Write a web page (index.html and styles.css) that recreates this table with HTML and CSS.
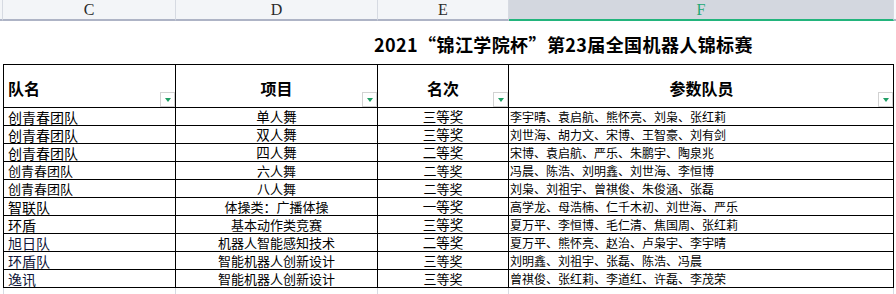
FILE: index.html
```html
<!DOCTYPE html>
<html lang="zh-CN">
<head>
<meta charset="utf-8">
<title>2021锦江学院杯 第23届全国机器人锦标赛</title>
<link rel="stylesheet" href="styles.css">
</head>
<body>
<div class="colbar">
  <div class="ch stub"></div>
  <div class="ch c">C</div>
  <div class="ch d">D</div>
  <div class="ch e">E</div>
  <div class="ch f sel">F</div>
  <div class="ch rest"></div>
</div>
<div class="title-row"><span class="title">2021“锦江学院杯”第23届全国机器人锦标赛</span></div>
<div class="sheet">
  <div class="row head">
    <div class="cell stub"></div>
    <div class="cell c">队名<span class="filter"></span></div>
    <div class="cell d">项目<span class="filter"></span></div>
    <div class="cell e">名次<span class="filter"></span></div>
    <div class="cell f">参数队员<span class="filter"></span></div>
  </div>
  <div class="row">
    <div class="cell stub"></div>
    <div class="cell c big">创青春团队</div>
    <div class="cell d big">单人舞</div>
    <div class="cell e big">三等奖</div>
    <div class="cell f">李宇晴、袁启航、熊怀亮、刘枭、张红莉</div>
  </div>
  <div class="row">
    <div class="cell stub"></div>
    <div class="cell c big">创青春团队</div>
    <div class="cell d big">双人舞</div>
    <div class="cell e big">三等奖</div>
    <div class="cell f">刘世海、胡力文、宋博、王智豪、刘有剑</div>
  </div>
  <div class="row">
    <div class="cell stub"></div>
    <div class="cell c big">创青春团队</div>
    <div class="cell d big">四人舞</div>
    <div class="cell e big">二等奖</div>
    <div class="cell f">宋博、袁启航、严乐、朱鹏宇、陶泉兆</div>
  </div>
  <div class="row">
    <div class="cell stub"></div>
    <div class="cell c">创青春团队</div>
    <div class="cell d">六人舞</div>
    <div class="cell e">二等奖</div>
    <div class="cell f">冯晨、陈浩、刘明鑫、刘世海、李恒博</div>
  </div>
  <div class="row">
    <div class="cell stub"></div>
    <div class="cell c">创青春团队</div>
    <div class="cell d">八人舞</div>
    <div class="cell e">二等奖</div>
    <div class="cell f">刘枭、刘祖宇、曾祺俊、朱俊涵、张磊</div>
  </div>
  <div class="row">
    <div class="cell stub"></div>
    <div class="cell c big">智联队</div>
    <div class="cell d">体操类：广播体操</div>
    <div class="cell e big">一等奖</div>
    <div class="cell f">高学龙、母浩楠、仁千木初、刘世海、严乐</div>
  </div>
  <div class="row">
    <div class="cell stub"></div>
    <div class="cell c big">环盾</div>
    <div class="cell d">基本动作类竞赛</div>
    <div class="cell e big">三等奖</div>
    <div class="cell f">夏万平、李恒博、毛仁清、焦国周、张红莉</div>
  </div>
  <div class="row">
    <div class="cell stub"></div>
    <div class="cell c big ink">旭日队</div>
    <div class="cell d">机器人智能感知技术</div>
    <div class="cell e big">二等奖</div>
    <div class="cell f">夏万平、熊怀亮、赵治、卢枭宇、李宇晴</div>
  </div>
  <div class="row">
    <div class="cell stub"></div>
    <div class="cell c big ink">环盾队</div>
    <div class="cell d">智能机器人创新设计</div>
    <div class="cell e">三等奖</div>
    <div class="cell f">刘明鑫、刘祖宇、张磊、陈浩、冯晨</div>
  </div>
  <div class="row">
    <div class="cell stub"></div>
    <div class="cell c big ink">逸讯</div>
    <div class="cell d">智能机器人创新设计</div>
    <div class="cell e">三等奖</div>
    <div class="cell f">曾祺俊、张红莉、李道红、许磊、李茂荣</div>
  </div>
  <div class="row tail">
    <div class="cell stub"></div>
    <div class="cell c"></div>
    <div class="cell d"></div>
    <div class="cell e"></div>
    <div class="cell f"></div>
  </div>
</div>
</body>
</html>
```

FILE: styles.css
```css
* { box-sizing: border-box; }
html, body { margin: 0; padding: 0; background: #fff; }
body {
  width: 896px;
  height: 294px;
  overflow: hidden;
  font-family: "Noto Sans CJK SC", "Noto Sans", sans-serif;
  color: #000;
}

/* column letter bar */
.colbar {
  display: flex;
  height: 21px;
  background: #f3f5f8;
}
.ch {
  height: 21px;
  border-right: 1px solid #d6dae2;
  border-bottom: 2px solid #aeb4c6;
  font-family: "Liberation Serif", serif;
  font-size: 16px;
  line-height: 19px;
  text-align: center;
  color: #2a2a2a;
}
.ch.stub { width: 3px; }
.ch.c { width: 173px; }
.ch.d { width: 202px; }
.ch.e { width: 131px; }
.ch.f { width: 385px; }
.ch.rest { flex: 1; border-right: none; background: #f6f8fb; }
.ch.sel {
  background: #d3d7df;
  color: #21a873;
  border-bottom-color: #22b47c;
}

/* title */
.title-row {
  height: 43px;
  padding-left: 374px;
  display: flex;
  align-items: center;
}
.title {
  font-size: 18px;
  font-weight: 700;
  line-height: 1;
  padding-top: 2px;
  letter-spacing: 0.4px;
}

/* table */
.sheet { display: flex; flex-direction: column; }
.row {
  display: flex;
  height: 18px;
}
.cell {
  position: relative;
  display: flex;
  align-items: center;
  justify-content: center;
  border-right: 1px solid #000;
  border-bottom: 1px solid #000;
  font-size: 13px;
  line-height: 1;
  white-space: nowrap;
}
.cell.stub { width: 3px; border: none; }
.cell.c { width: 173px; border-left: 1px solid #000; justify-content: flex-start; padding-left: 4px; }
.cell.d { width: 202px; }
.cell.e { width: 131px; }
.cell.f { width: 385px; justify-content: flex-start; padding-left: 1px; font-size: 12px; }
.cell.big { font-size: 13.5px; }
.cell.c.big { font-size: 14px; }
.cell.ink { color: #10163a; }

.row.head { height: 44px; }
.row.head .cell {
  border-top: 1px solid #000;
  font-size: 16px;
  font-weight: 700;
  padding-top: 3px;
  justify-content: center;
}
.row.head .cell.c { justify-content: flex-start; }
.row.head .cell.stub { border: none; }

.filter {
  position: absolute;
  right: 0;
  bottom: 0;
  width: 15px;
  height: 15px;
  background: #fff;
  border: 1px solid #d2d2d2;
  display: flex;
  align-items: center;
  justify-content: center;
}
.filter::after {
  content: "";
  width: 0;
  height: 0;
  border-left: 3.5px solid transparent;
  border-right: 3.5px solid transparent;
  border-top: 4px solid #1f9e64;
}

.row.tail { height: 8px; }
.row.tail .cell {
  border-bottom: none;
  border-right-color: #d6dae2;
}
.row.tail .cell.c { border-left-color: #d6dae2; }
```
